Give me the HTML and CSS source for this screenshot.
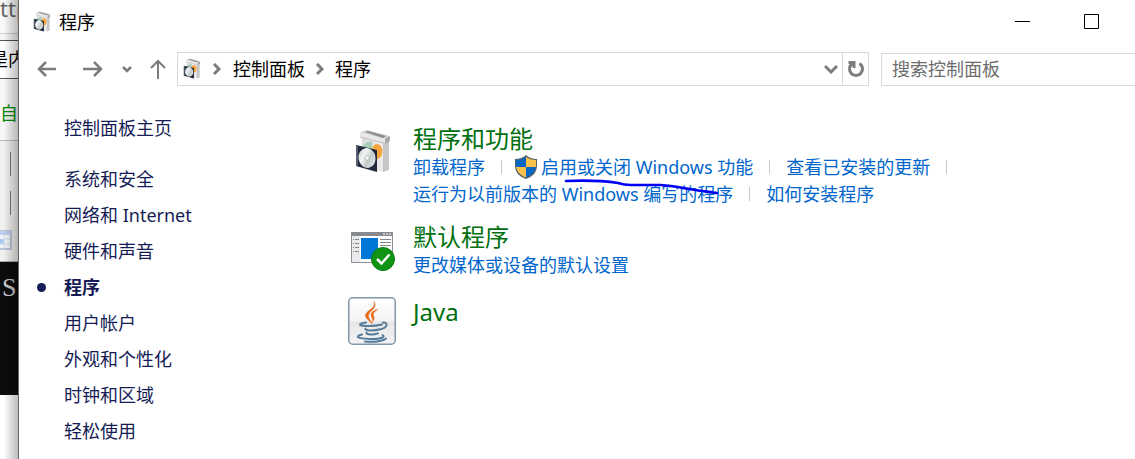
FILE: index.html
```html
<!DOCTYPE html>
<html lang="zh-CN">
<head>
<meta charset="utf-8">
<title>程序</title>
<link rel="stylesheet" href="styles.css">
</head>
<body>
<svg class="defs" width="0" height="0" aria-hidden="true">
  <defs>
    <linearGradient id="boxFront" x1="0" x2="1"><stop offset="0" stop-color="#dcdcde"/><stop offset="1" stop-color="#ececec"/></linearGradient>
    <linearGradient id="disc" x1="0" y1="0" x2="1" y2="1"><stop offset="0" stop-color="#b9c3c4"/><stop offset=".35" stop-color="#f4f6f6"/><stop offset=".6" stop-color="#c3caca"/><stop offset="1" stop-color="#f1f1f1"/></linearGradient>
    <linearGradient id="javaTile" x1="0" y1="0" x2="0" y2="1"><stop offset="0" stop-color="#ffffff"/><stop offset=".5" stop-color="#f3f3f3"/><stop offset=".52" stop-color="#e6e6e6"/><stop offset="1" stop-color="#f4f4f4"/></linearGradient>
    <symbol id="programs" viewBox="7 1 36 46">
      <path d="M14 8 36 13V44L14 40Z" fill="url(#boxFront)"/>
      <path d="m35 14 6-3v31l-6 2Z" fill="#c6c6c8"/>
      <path d="m13 4 6-2 23 6-5 4-24-5Z" fill="#d3d3d5"/>
      <path d="m17 4 3-1 18 5-3 2Z" fill="#8c8c90"/>
      <path d="m12 4 25 7v4L12 9Z" fill="#e9e9ea"/>
      <path d="m12 9 24 6" stroke="#b0b0b4" stroke-width=".7"/>
      <path d="m37 11 5-3v5l-5 3Z" fill="#a5a5aa"/>
      <path d="M14 19q3-5 10-6v15l-10-4Z" fill="#a6cdb8"/>
      <ellipse cx="29" cy="23.500" rx="5.500" ry="7.500" fill="#f6a43c"/>
      <path d="m8 17 21 5v22L8 38Z" fill="#20283a"/>
      <path d="m8 17 2 .5v21L8 38Z" fill="#536276"/>
      <ellipse cx="19" cy="30" rx="8.500" ry="10" fill="url(#disc)" transform="rotate(-12 19 30)"/>
      <circle cx="19" cy="30" r="2.200" fill="#fff" stroke="#b4baba"/>
    </symbol>
  </defs>
</svg>
<div class="screen">
  <aside class="behind">
    <div class="behind-url">ttp</div>
    <div class="behind-gap"></div>
    <div class="behind-field">是内</div>
    <div class="behind-auto">自动</div>
    <div class="behind-tools">
      <i class="bar"></i><i class="bar"></i>
      <svg class="table-icon" width="12" height="20" viewBox="0 0 12 20"><path d="M0 1h11v18H0" fill="#f2f4f8" stroke="#bac5d7" stroke-width="2"/><path d="M0 1h11v4H0Z" fill="#bdd0ef"/><path d="M0 9h4v5H0Z" fill="#a9c9f2"/><path d="M4 5v13M0 14h10M4 9h6" stroke="#d0d8e4"/></svg>
    </div>
    <div class="behind-console">S</div>
  </aside>
  <div class="window">
    <header class="titlebar">
      <svg class="small-icon"><use href="#programs"/></svg>
      <h1>程序</h1>
      <button class="caption" aria-label="最小化"><svg width="15" height="15"><path d="M0 7.500h15" stroke="#000"/></svg></button>
      <button class="caption" aria-label="最大化"><svg width="15" height="15"><path d="M.5.5h14v14H.5Z" fill="none" stroke="#000"/></svg></button>
    </header>
    <nav class="toolbar" aria-label="导航">
      <div class="history">
        <button aria-label="后退"><svg width="20" height="16" viewBox="0 0 20 16"><path d="M19 8H2M9 1 2 8l7 7"/></svg></button>
        <button aria-label="前进"><svg width="20" height="16" viewBox="0 0 20 16"><path d="M0 8h18M11 1l7 7-7 7"/></svg></button>
        <button aria-label="最近位置"><svg width="10" height="16" viewBox="0 0 10 16"><path d="m1 6 4 4 4-4"/></svg></button>
        <button aria-label="向上"><svg class="thin" width="16" height="20" viewBox="0 0 16 20"><path d="M8 20V2M1 9l7-7 7 7"/></svg></button>
      </div>
      <div class="address">
        <svg class="small-icon"><use href="#programs"/></svg>
        <svg class="sep" width="8" height="12" viewBox="0 0 8 12"><path d="m1 1 5 5-5 5"/></svg>
        <a href="#">控制面板</a>
        <svg class="sep" width="8" height="12" viewBox="0 0 8 12"><path d="m1 1 5 5-5 5"/></svg>
        <a href="#">程序</a>
        <button class="drop" aria-label="展开"><svg width="14" height="10" viewBox="0 0 14 10"><path d="m1 2 6 6 6-6"/></svg></button>
        <button class="refresh" aria-label="刷新"><svg width="18" height="18" viewBox="0 0 18 18"><path d="M12.500 3.500a6.500 6.500 0 1 1-7 0M1.500 2.500H7V8"/></svg></button>
      </div>
      <input class="search" type="text" placeholder="搜索控制面板" aria-label="搜索控制面板">
    </nav>
    <div class="content">
      <nav class="side" aria-label="类别">
        <a class="home" href="#">控制面板主页</a>
        <a href="#">系统和安全</a>
        <a href="#">网络和 Internet</a>
        <a href="#">硬件和声音</a>
        <a class="current" href="#" aria-current="page">程序</a>
        <a href="#">用户帐户</a>
        <a href="#">外观和个性化</a>
        <a href="#">时钟和区域</a>
        <a href="#">轻松使用</a>
      </nav>
      <main class="groups">
        <section class="group">
          <svg class="big-icon" viewBox="0 0 48 48"><use href="#programs" x="7" y="1" width="36" height="46"/></svg>
          <div class="info">
            <h2><a href="#">程序和功能</a></h2>
            <div class="tasks">
              <a href="#">卸载程序</a><i class="divider"></i>
              <a class="shielded" href="#"><svg width="24" height="24" viewBox="0 0 24 24"><path d="M12 0q4 4 11 4v7q0 9-11 13Q1 20 1 11V4q7 0 11-4Z" fill="#54606a"/><path d="M12 2v10H2V5q6 0 10-3Z" fill="#0867c5"/><path d="M12 2q4 3 10 3v7H12Z" fill="#fcc14a"/><path d="M2 12h10v10.500Q3 19 2 12Z" fill="#fcc14a"/><path d="M12 12h10q-1 7-10 10.500Z" fill="#0867c5"/></svg>启用或关闭 Windows 功能</a><i class="divider"></i>
              <a href="#">查看已安装的更新</a><i class="divider"></i>
            </div>
            <div class="tasks">
              <a href="#">运行为以前版本的 Windows 编写的程序</a><i class="divider"></i>
              <a href="#">如何安装程序</a>
            </div>
            <svg class="scribble" width="156" height="18" viewBox="0 0 156 18" aria-hidden="true"><path d="M2 4c24-1 39 0 52 2q6 2 13 2h30c17 1 28 5 56 8" fill="none" stroke="#0000f5" stroke-width="2.600" stroke-linecap="round"/></svg>
          </div>
        </section>
        <section class="group">
          <svg class="big-icon" viewBox="0 0 48 48"><path d="M3.500 6.500h41v30h-41Z" fill="#fff" stroke="#8b8f93"/><path d="M3 6h42v4H3Z" fill="#878b90"/><path d="M35 8h2m1 0h2m1 0h2" stroke="#fff"/><path d="M4 10h8v26H4Z" fill="#e8eaec"/><path d="M5 13.500h1m1 0h4M5 17.500h1m1 0h4M5 21.500h1m1 0h4M5 25.500h1m1 0h4M32 13.500h11M32 16.500h11M32 19.500h11" stroke="#888"/><path d="M13 12h17v21H13Z" fill="#0078d7"/><circle cx="35" cy="33" r="11.500" fill="#109416" stroke="#087a0d"/><path d="m29 33 4.500 4.500 8-9" fill="none" stroke="#fff" stroke-width="2.500"/></svg>
          <div class="info">
            <h2><a href="#">默认程序</a></h2>
            <div class="tasks"><a href="#">更改媒体或设备的默认设置</a></div>
          </div>
        </section>
        <section class="group single">
          <svg class="big-icon" viewBox="0 0 48 48"><rect x=".75" y=".75" width="46.500" height="46.500" rx="4" fill="url(#javaTile)" stroke="#8296aa" stroke-width="1.500"/><path d="M26 4.500c3 7-9 9-8.500 14.500.3 3 4.500 4.500 6.500 8-1-4-4-6-3.500-8.500C21 14 30 11 26 4.500Z" fill="#e66d1c" stroke="#e66d1c" stroke-width=".6"/><path d="M31 12c-6 1-9 4-8 7 .6 2 2.500 4 1 7 4-4 2-6 1.500-8-.4-2 2-4 5.500-6Z" fill="#e66d1c"/><g fill="none" stroke="#557b9b" stroke-linecap="round" stroke-width="2"><path d="M18 25.500c-7 1-8 2.800-2 3.300 6 .5 13 0 18-1.300M35 25.500c5-.5 5 4.500-1.500 6.500M17.500 31.500c-1.500 2.500 9 2.500 14.500.8M18.500 35.500c-1 2.500 7.500 2.500 11.500.8"/><path d="M14 37.500c-11 3 2 4.500 10 4.500 9 0 14-2 10.500-4M17 44.500c10 1 18.500-.8 21-3"/></g></svg>
          <div class="info"><h2><a href="#">Java</a></h2></div>
        </section>
      </main>
    </div>
  </div>
</div>
</body>
</html>
```
FILE: styles.css
```css
* { box-sizing: border-box; }
body {
  margin: 0;
  overflow: hidden;
  background: #fff;
  color: #000;
  font: 18px/28px "Noto Sans", "Noto Sans CJK SC", sans-serif;
}
a { color: inherit; text-decoration: none; white-space: nowrap; }
button { border: 0; padding: 0; background: none; display: flex; align-items: center; justify-content: center; }
svg { flex: none; display: block; }
.defs { position: absolute; }
.screen { display: grid; grid-template-columns: 19px minmax(0, 1fr); min-height: 100vh; }

.behind { position: relative; overflow: hidden; border-right: 1px solid #666; white-space: nowrap; }
.behind::after {
  content: "";
  position: absolute;
  inset: 0;
  background: linear-gradient(to right, transparent 20%, rgba(0, 0, 0, .26));
}
.behind-url { height: 34px; line-height: 16px; font-size: 22px; color: #666; background: #f9f9f9; border-bottom: 1px solid #ccc; }
.behind-gap { height: 6px; background: #f5f5f5; }
.behind-field { height: 39px; line-height: 37px; margin-left: -10px; border: solid #555; border-width: 1px 0; background: #fff; }
.behind-auto { height: 62px; line-height: 68px; color: #0a8a0a; background: #f7f7f7; border-bottom: 1px solid #bbb; }
.behind-tools { height: 121px; padding-top: 11px; background: #f1f1ef; border-bottom: 1px solid #aaa; }
.bar { display: block; width: 1px; height: 24px; margin: 0 0 15px 10px; background: #777; }
.table-icon { margin-top: 2px; }
.behind-console { height: 133px; background: #0c0c0c; color: #ccc; font: 26px/52px "Liberation Serif", serif; padding-left: 2px; }

.window { background: #fff; }
.titlebar { display: flex; align-items: center; height: 43px; padding-left: 14px; }
.titlebar h1 { margin: 0 auto 0 8px; font-size: 18px; font-weight: 400; line-height: 26px; }
.small-icon { width: 18px; height: 22px; }
.caption { width: 69px; height: 43px; }
.caption:last-child { margin-right: 9px; }

.toolbar { display: flex; align-items: center; height: 52px; padding-left: 18px; }
.history svg, .sep, .address button svg { fill: none; stroke: #7c7c7c; stroke-width: 2.5; }
.history .thin { stroke-width: 2; }
.history { display: flex; align-items: center; width: 140px; }
.history button:nth-child(2) { margin-left: 26px; }
.history button:nth-child(3) { margin-left: 19px; }
.history button:nth-child(4) { margin-left: 18px; }
.address { display: flex; align-items: center; flex: 1; height: 34px; border: 1px solid #d9d9d9; padding-left: 5px; }
.address .sep { margin: 0 12px; stroke-width: 3; }
.address .sep + a + .sep { margin: 0 11px; }
.address .drop { width: 22px; height: 32px; margin-left: auto; }
.address .drop svg, .address .refresh svg { stroke-width: 3; }
.address .refresh { width: 26px; height: 32px; border-left: 1px solid #d9d9d9; }
.search {
  width: 254px;
  height: 33px;
  margin-left: 12px;
  padding: 0 10px;
  border: 1px solid #d9d9d9;
  border-right: 0;
  font: inherit;
}
.search::placeholder { color: #6d6d6d; opacity: 1; }

.content { display: flex; padding-top: 15px; }
.side { display: flex; flex-direction: column; width: 329px; padding-left: 45px; color: #151c55; line-height: 36px; }
.side .home { margin-bottom: 15px; }
.side .current { position: relative; font-weight: 700; }
.side .current::before {
  content: "";
  position: absolute;
  left: -27px;
  top: 14px;
  width: 9px;
  height: 9px;
  border-radius: 50%;
  background: #151c55;
}
.groups { display: flex; flex-direction: column; gap: 15px; padding-top: 14px; }
.group { display: flex; gap: 17px; }
.big-icon { width: 48px; height: 48px; margin-top: 4px; }
.info { position: relative; }
.info h2 { margin: 0; color: #006f0d; font-size: 24px; font-weight: 400; line-height: 29px; }
.single .info { padding-top: 4px; }
.tasks { display: flex; align-items: center; height: 27px; color: #0066cc; }
.divider { width: 1px; height: 14px; margin: 0 16px; background: #c8c8c8; }
.shielded { display: flex; align-items: center; gap: 3px; margin-left: -4px; }
.scribble { position: absolute; left: 151px; top: 53px; }
```
